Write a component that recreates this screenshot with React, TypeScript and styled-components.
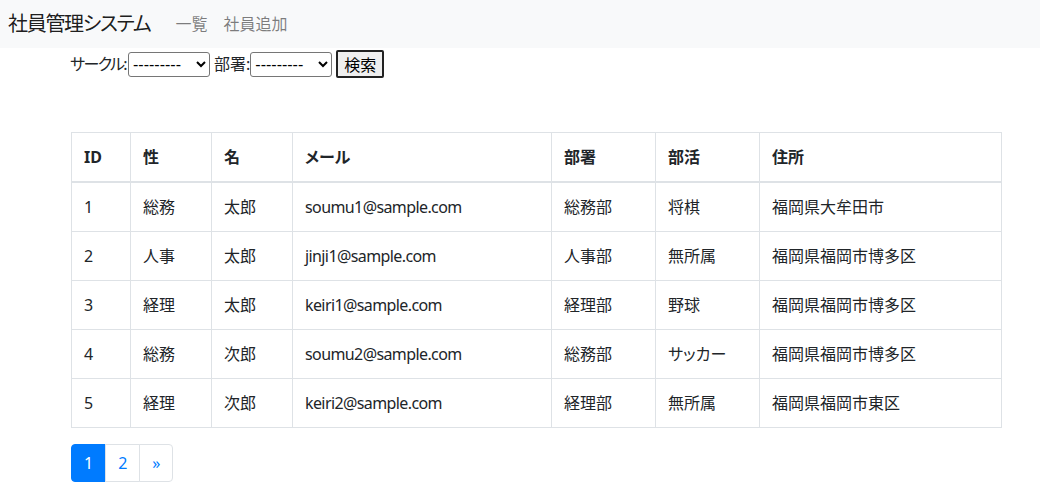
import styled, { createGlobalStyle } from "styled-components"

const GlobalStyle = createGlobalStyle`
    body {
        margin: 0;
        font-family: "Noto Sans", "Noto Sans CJK JP", sans-serif;
        font-size: 16px;
        line-height: 1.5;
        color: #212529;
        background: #fff;
        font-feature-settings: "palt";
    }
`

const Navbar = styled.nav`
    display: flex;
    align-items: center;
    height: 48px;
    padding: 0 8px;
    background-color: #f8f9fa;
`

const Brand = styled.span`
    font-size: 20px;
    color: rgba(0, 0, 0, 0.9);
    margin-right: 17px;
    letter-spacing: -1.3px;
`

const NavLink = styled.a`
    color: rgba(0, 0, 0, 0.5);
    font-size: 16px;
    padding: 0 8px;
    text-decoration: none;
`

const Main = styled.main`
    padding: 0 39px 0 71px;
`

const SearchForm = styled.form`
    display: flex;
    align-items: center;
    height: 32px;
    margin: 0 0 52px -1px;
    font-size: 16px;
`

const Label = styled.label`
    display: flex;
    align-items: center;
    margin-right: 4px;
`

const LabelText = styled.span<{ $tight?: boolean }>`
    letter-spacing: ${(p) => (p.$tight ? "-1.6px" : "0")};
    padding-right: ${(p) => (p.$tight ? "2px" : "0")};
`

const Select = styled.select`
    width: 82px;
    height: 25px;
    font-size: 16px;
    font-family: "Liberation Sans", sans-serif;
    border: 1px solid #767676;
    border-radius: 3px;
    background: #fff;
    color: #000;
`

const Button = styled.button`
    height: 28px;
    padding: 0 6px;
    font-size: 16px;
    font-family: "Noto Sans CJK JP", sans-serif;
    background: #efefef;
    border: 2px solid #222;
    border-radius: 2px;
    color: #000;
    line-height: 1;
`

const Table = styled.table`
    width: 930px;
    table-layout: fixed;
    border-collapse: collapse;
    margin-bottom: 16px;
`

const Th = styled.th`
    text-align: left;
    font-weight: 700;
    padding: 12px;
    border: 1px solid #dee2e6;
    border-bottom-width: 2px;
    vertical-align: bottom;
`

const Td = styled.td<{ $latin?: boolean }>`
    padding: 12px;
    border: 1px solid #dee2e6;
    vertical-align: top;
    white-space: nowrap;
    letter-spacing: ${(p) => (p.$latin ? "-0.6px" : "0")};
`

const Pagination = styled.ul`
    display: flex;
    list-style: none;
    margin: 0;
    padding: 0;
`

const PageLink = styled.a<{ $active?: boolean; $first?: boolean; $last?: boolean }>`
    display: block;
    padding: 8px 12px;
    line-height: 1.25;
    margin-left: ${(p) => (p.$first ? "0" : "-1px")};
    border: 1px solid ${(p) => (p.$active ? "#007bff" : "#dee2e6")};
    background: ${(p) => (p.$active ? "#007bff" : "#fff")};
    color: ${(p) => (p.$active ? "#fff" : "#007bff")};
    border-radius: ${(p) => (p.$first ? "4px 0 0 4px" : p.$last ? "0 4px 4px 0" : "0")};
    text-decoration: none;
    font-size: 16px;
`

const rows = [
    ["1", "総務", "太郎", "soumu1@sample.com", "総務部", "将棋", "福岡県大牟田市"],
    ["2", "人事", "太郎", "jinji1@sample.com", "人事部", "無所属", "福岡県福岡市博多区"],
    ["3", "経理", "太郎", "keiri1@sample.com", "経理部", "野球", "福岡県福岡市博多区"],
    ["4", "総務", "次郎", "soumu2@sample.com", "総務部", "サッカー", "福岡県福岡市博多区"],
    ["5", "経理", "次郎", "keiri2@sample.com", "経理部", "無所属", "福岡県福岡市東区"],
]

const headers = ["ID", "性", "名", "メール", "部署", "部活", "住所"]
const widths = [59, 81, 81, 259, 104, 104, 242]

const App = (): JSX.Element => {
    return (
        <>
            <GlobalStyle />
            <Navbar>
                <Brand>社員管理システム</Brand>
                <NavLink href="#">一覧</NavLink>
                <NavLink href="#">社員追加</NavLink>
            </Navbar>
            <Main>
                <SearchForm>
                    <Label>
                        <LabelText $tight>サークル:</LabelText>
                        <Select defaultValue="">
                            <option value="">---------</option>
                        </Select>
                    </Label>
                    <Label>
                        <LabelText>部署:</LabelText>
                        <Select defaultValue="">
                            <option value="">---------</option>
                        </Select>
                    </Label>
                    <Button type="button">検索</Button>
                </SearchForm>
                <Table>
                    <colgroup>
                        {widths.map((w, i) => (
                            <col key={i} style={{ width: w }} />
                        ))}
                    </colgroup>
                    <thead>
                        <tr>
                            {headers.map((h) => (
                                <Th key={h}>{h}</Th>
                            ))}
                        </tr>
                    </thead>
                    <tbody>
                        {rows.map((r) => (
                            <tr key={r[0]}>
                                {r.map((c, i) => (
                                    <Td key={i} $latin={i === 3}>{c}</Td>
                                ))}
                            </tr>
                        ))}
                    </tbody>
                </Table>
                <Pagination>
                    <li><PageLink href="#" $active $first>1</PageLink></li>
                    <li><PageLink href="#">2</PageLink></li>
                    <li><PageLink href="#" $last>»</PageLink></li>
                </Pagination>
            </Main>
        </>
    )
}

export default App
